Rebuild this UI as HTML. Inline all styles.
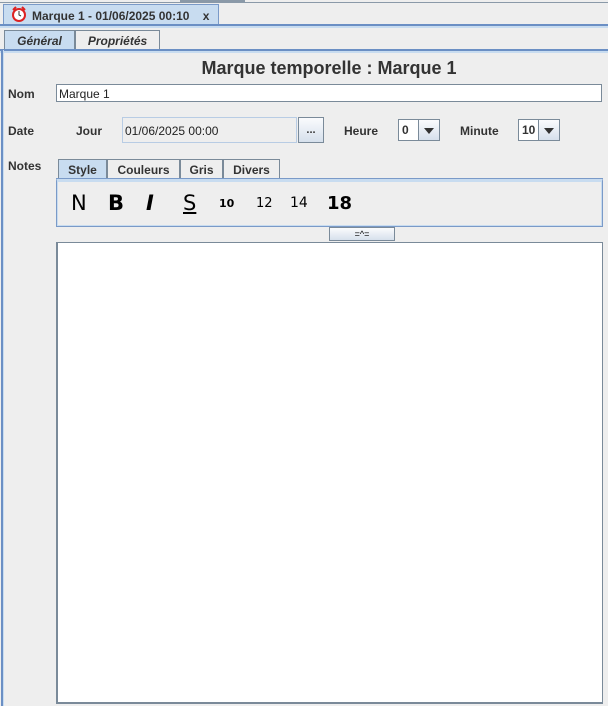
<!DOCTYPE html>
<html><head><style>
body{margin:0;width:608px;height:706px;background:#eeeeee;position:relative;overflow:hidden;font-family:"Liberation Sans",sans-serif;font-size:12px;color:#333}
.a{position:absolute}
.b{font-weight:bold}
.tab{position:absolute;border:1px solid #7a8a99;border-bottom:none;background:#eeeeee;font-weight:bold;color:#333;box-sizing:border-box;text-align:center}
.sel{background:#c8dcf0}
.combo{position:absolute;height:22px;border:1px solid #7a8a99;background:#fff;box-sizing:border-box}
.arr{position:absolute;right:0;top:0;width:20px;height:20px;background:linear-gradient(#fafbfd,#d6e0ec);border-left:1px solid #7a8a99}
.arr:after{content:"";position:absolute;left:5px;top:8px;border-left:5px solid transparent;border-right:5px solid transparent;border-top:6px solid #333}
</style></head><body>
<div class="a" style="left:0;top:2px;width:608px;height:1px;background:#8a99a8"></div>
<div class="a" style="left:180px;top:0;width:65px;height:3px;background:#8a99a8"></div>
<div class="tab sel" style="left:3px;top:4px;width:216px;height:21px;border-color:#7a9ac8;text-align:left;padding:4px 0 0 28px;font-size:12px">Marque 1 - 01/06/2025 00:10 &nbsp;&nbsp;&nbsp;x</div>
<svg class="a" style="left:11px;top:6px" width="16" height="16" viewBox="0 0 16 16"><circle cx="8" cy="9" r="6" fill="#fff" stroke="#d22" stroke-width="2"/><path d="M2 4 L5 1 M14 4 L11 1" stroke="#d22" stroke-width="2"/><path d="M8 5 V9 L10 10" stroke="#333" fill="none"/></svg>
<div class="a" style="left:0;top:24px;width:608px;height:2px;background:#6b8fc4"></div>
<div class="a" style="left:0;top:26px;width:608px;height:2px;background:#c8dcf0"></div>
<div class="tab sel" style="left:4px;top:30px;width:71px;height:20px;padding-top:3px;font-style:italic">Général</div>
<div class="tab" style="left:75px;top:30px;width:85px;height:20px;padding-top:3px;font-style:italic">Propriétés</div>
<div class="a" style="left:0;top:49px;width:608px;height:2px;background:#6b8fc4"></div>
<div class="a" style="left:0;top:51px;width:608px;height:2px;background:#c8dcf0"></div>
<div class="a" style="left:1px;top:50px;width:2px;height:656px;background:#6b8fc4"></div>
<div class="a" style="left:3px;top:50px;width:1px;height:656px;background:#c8dcf0"></div>
<div class="a b" style="left:0;width:658px;text-align:center;top:58px;font-size:18px">Marque temporelle : Marque 1</div>
<div class="a b" style="left:8px;top:87px">Nom</div>
<div class="a" style="left:56px;top:84px;width:546px;height:18px;border:1px solid #7a8a99;background:#fff;box-sizing:border-box;padding:2px 2px;font-size:12px;color:#222">Marque 1</div>
<div class="a b" style="left:8px;top:124px">Date</div>
<div class="a b" style="left:76px;top:124px">Jour</div>
<div class="a" style="left:122px;top:117px;width:175px;height:26px;border:1px solid #b8cce4;box-sizing:border-box;padding:6px 2px;color:#222">01/06/2025 00:00</div>
<div class="a b" style="left:298px;top:117px;width:26px;height:26px;border:1px solid #7a8a99;box-sizing:border-box;background:linear-gradient(#fafbfd,#d6e0ec);text-align:center;font-size:11px;padding-top:6px">...</div>
<div class="a b" style="left:344px;top:124px">Heure</div>
<div class="combo" style="left:398px;top:119px;width:42px"><span class="a b" style="left:3px;top:3px">0</span><div class="arr"></div></div>
<div class="a b" style="left:460px;top:124px">Minute</div>
<div class="combo" style="left:518px;top:119px;width:42px"><span class="a b" style="left:3px;top:3px">10</span><div class="arr"></div></div>
<div class="a b" style="left:8px;top:159px">Notes</div>
<div class="tab sel" style="left:58px;top:159px;width:49px;height:20px;padding-top:3px">Style</div>
<div class="tab" style="left:107px;top:159px;width:73px;height:20px;padding-top:3px">Couleurs</div>
<div class="tab" style="left:180px;top:159px;width:43px;height:20px;padding-top:3px">Gris</div>
<div class="tab" style="left:223px;top:159px;width:57px;height:20px;padding-top:3px">Divers</div>
<div class="a" style="left:56px;top:178px;width:547px;height:49px;border:1px solid #7a9ac8;border-top:3px solid #c8dcf0;box-sizing:border-box;box-shadow:inset 0 0 0 1px #c8dcf0"></div>
<div class="a" style="left:56px;top:178px;width:547px;height:1px;background:#7a9ac8"></div>
<div class="a" style="left:71px;top:191px;font-size:21px;font-family:'DejaVu Sans',sans-serif;color:#000">N</div>
<div class="a" style="left:108px;top:191px;font-size:21px;font-family:'DejaVu Sans',sans-serif;font-weight:bold;color:#000">B</div>
<div class="a" style="left:146px;top:191px;font-size:21px;font-family:'DejaVu Sans',sans-serif;font-weight:bold;font-style:italic;color:#000">I</div>
<div class="a" style="left:183px;top:191px;font-size:21px;font-family:'DejaVu Sans',sans-serif;text-decoration:underline;color:#000">S</div>
<div class="a" style="left:219px;top:197px;font-size:11px;font-family:'DejaVu Sans',sans-serif;font-weight:bold;color:#000">10</div>
<div class="a" style="left:256px;top:196px;font-size:13px;font-family:'DejaVu Sans',sans-serif;color:#000">12</div>
<div class="a" style="left:290px;top:195px;font-size:14px;font-family:'DejaVu Sans',sans-serif;color:#000">14</div>
<div class="a" style="left:327px;top:193px;font-size:18px;font-family:'DejaVu Sans',sans-serif;font-weight:bold;color:#000">18</div>
<div class="a" style="left:329px;top:227px;width:66px;height:14px;border:1px solid #7a8a99;box-sizing:border-box;background:linear-gradient(#fafbfd,#d6e0ec);text-align:center;font-size:9px;line-height:12px;color:#000">=^=</div>
<div class="a" style="left:56px;top:242px;width:547px;height:462px;border:1px solid #7a8a99;border-bottom:2px solid #7a8a99;border-left:2px solid #7a8a99;box-sizing:border-box;background:#fff"></div>
</body></html>
